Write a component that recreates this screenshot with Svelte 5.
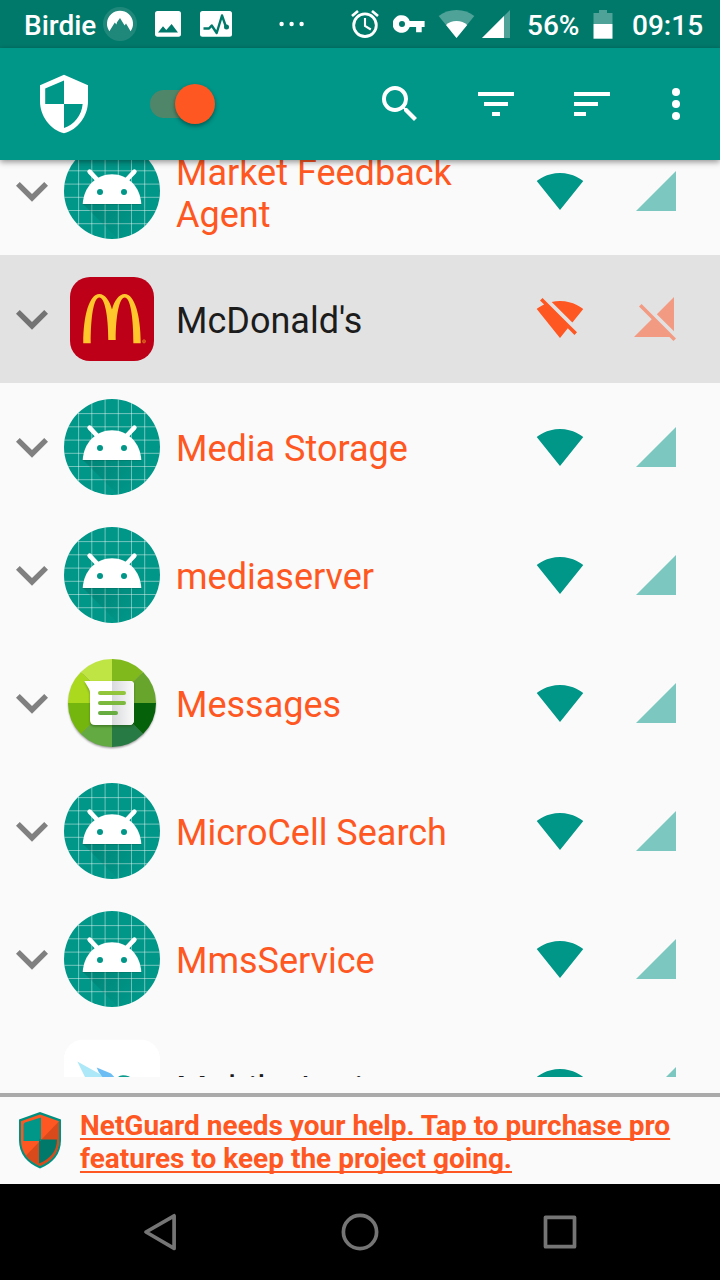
<script>
  const apps = [
    { name: 'Market Feedback Agent', icon: 'android', system: true },
    { name: "McDonald's", icon: 'mcd', blocked: true },
    { name: 'Media Storage', icon: 'android', system: true },
    { name: 'mediaserver', icon: 'android', system: true },
    { name: 'Messages', icon: 'messages', system: true },
    { name: 'MicroCell Search', icon: 'android', system: true },
    { name: 'MmsService', icon: 'android', system: true },
    { name: 'Mobile Assist', icon: 'mobile' }
  ];
  const grid = [14.6, 27.8, 41.1, 54.3, 67.5, 80.7];
  const wedges = [
    ['M48 48V4A44 44 0 0 0 16.9 16.9Z', '#bfe544'],
    ['M48 48L16.9 16.9A44 44 0 0 0 4 48Z', '#abd91d'],
    ['M48 48H4A44 44 0 0 0 16.9 79.1Z', '#74b60d'],
    ['M48 48L16.9 79.1A44 44 0 0 0 48 92Z', '#62aa41'],
    ['M48 48V92A44 44 0 0 0 79.1 79.1Z', '#277a43'],
    ['M48 48L79.1 79.1A44 44 0 0 0 92 48Z', '#05620a'],
    ['M48 48H92A44 44 0 0 0 79.1 16.9Z', '#67a52c'],
    ['M48 48L79.1 16.9A44 44 0 0 0 48 4Z', '#7fb91b']
  ];
</script>

<div class="screen">
  <header class="status">
    <span class="carrier">Birdie</span>
    <svg class="vpn" viewBox="102 0 36 48" width="36" height="48">
      <circle cx="120" cy="24" r="17" fill="#20887b" />
      <path d="M109.4 31.2A13 13 0 1 1 130.6 31.2L126 23.6L124.6 25.5L120 18L117 22.3L116.4 24.6L114.8 22.6Z" fill="#fff" />
    </svg>
    <svg class="photo" viewBox="155 0 26 48" width="26" height="48">
      <path fill="#fff" fill-rule="evenodd" d="M157.5 11H178.5Q181 11 181 13.5V34Q181 36.7 178.5 36.7H157.5Q155 36.7 155 34V13.5Q155 11 157.5 11ZM158 32.5H178L171.6 24L166.3 30L163 26.2Z" />
    </svg>
    <svg class="pulse" viewBox="200 0 32 48" width="32" height="48">
      <rect x="200" y="11" width="32" height="25.7" rx="2.5" fill="#fff" />
      <path d="M203.5 28.5H209L211.7 25.5L216.7 33L222 15.5L226 27" fill="none" stroke="#00796b" stroke-width="2.4" stroke-linejoin="round" />
      <circle cx="226.5" cy="27" r="2.5" fill="#00796b" />
    </svg>
    <svg class="dots" viewBox="278 0 28 48" width="28" height="48" fill="#fff">
      <circle cx="281.6" cy="24" r="2.2" /><circle cx="291.6" cy="24" r="2.2" /><circle cx="301.6" cy="24" r="2.2" />
    </svg>
    <svg class="alarm" viewBox="350 0 30 48" width="30" height="48" fill="none" stroke="#fff">
      <circle cx="365" cy="25.2" r="11.3" stroke-width="2.8" />
      <path d="M365 18V26L370.8 29.5" stroke-width="2.1" />
      <path d="M352 16L358 11M372 11L378 16" stroke-width="2.7" />
    </svg>
    <svg class="key" viewBox="393 0 32 48" width="32" height="48">
      <path fill="#fff" fill-rule="evenodd" d="M409.7 21H424.6V27H421.7V32.3H416.1V27H409.7A8.8 8.8 0 1 1 409.7 21ZM402 21A3 3 0 1 0 402 27A3 3 0 1 0 402 21Z" />
    </svg>
    <svg class="wifi-s" viewBox="438 0 37 48" width="37" height="48">
      <path d="M438.7 16Q446 10 456.5 10T474.3 16L456.5 38Z" fill="#4fa297" />
      <path d="M446 25Q450 21 456.5 21T467.2 25L456.5 38Z" fill="#fff" />
    </svg>
    <svg class="cell-s" viewBox="482 0 28 48" width="28" height="48">
      <path d="M482 38L510 10V38Z" fill="#4fa297" /><path d="M482 38L504 16V38Z" fill="#fff" />
    </svg>
    <span class="percent">56%</span>
    <svg class="battery" viewBox="593 0 20 48" width="20" height="48">
      <path d="M593.5 13H599V10H607V13H612.5V24H593.5Z" fill="#4fa297" /><path d="M593.5 24H612.5V38.7H593.5Z" fill="#fff" />
    </svg>
    <span class="clock">09:15</span>
  </header>

  <div class="toolbar">
    <svg class="shield" width="64" height="64" viewBox="0 0 24 24">
      <path fill="#fff" fill-rule="evenodd" d="M12 1L3 5v6c0 5.55 3.84 10.74 9 12 5.16-1.26 9-6.45 9-12V5zM12 3.2V12H4.95V6.2zM12 12h7c-.4 4.3-3.2 7.8-7 9z" />
    </svg>
    <div class="switch"><span class="thumb"></span></div>
    <div class="actions">
      <svg width="48" height="48" viewBox="0 0 24 24" fill="#fff"><path d="M15.5 14h-.79l-.28-.27A6.47 6.47 0 0 0 16 9.5 6.5 6.5 0 1 0 9.5 16c1.61 0 3.09-.59 4.23-1.57l.27.28v.79l5 4.99L20.49 19l-4.99-5zm-6 0C7.01 14 5 11.99 5 9.5S7.01 5 9.5 5 14 7.01 14 9.5 11.99 14 9.5 14z" /></svg>
      <svg width="48" height="48" viewBox="0 0 24 24" fill="#fff"><path d="M10 18h4v-2h-4v2zM3 6v2h18V6H3zm3 7h12v-2H6v2z" /></svg>
      <svg width="48" height="48" viewBox="0 0 24 24" fill="#fff"><path d="M3 18h6v-2H3v2zM3 6v2h18V6H3zm0 7h12v-2H3v2z" /></svg>
      <svg class="more" width="48" height="48" viewBox="0 0 24 24" fill="#fff"><circle cx="12" cy="6" r="2" /><circle cx="12" cy="12" r="2" /><circle cx="12" cy="18" r="2" /></svg>
    </div>
  </div>

  <main class="list">
    {#each apps as app}
      <div class="row" class:blocked={app.blocked}>
        <svg class="chevron" width="64" height="64" viewBox="0 0 24 24"><path d="M16.59 8.59L12 13.17 7.41 8.59 6 10l6 6 6-6z" /></svg>
        <svg class="icon" width="96" height="96" viewBox="0 0 96 96">
          {#if app.icon === 'android'}
            <defs>
              <clipPath id="disc"><circle cx="48" cy="48" r="48" /></clipPath>
              <linearGradient id="cast" x1="20" y1="55" x2="62" y2="96" gradientUnits="userSpaceOnUse">
                <stop offset="0" stop-color="#004d40" stop-opacity=".26" /><stop offset="1" stop-color="#004d40" stop-opacity="0" />
              </linearGradient>
            </defs>
            <g clip-path="url(#disc)">
              <rect width="96" height="96" fill="#009688" />
              {#each grid as g}
                <path d="M{g} 0V96M0 {g}H96" stroke="#fff" stroke-opacity=".45" stroke-width="1" />
              {/each}
              <path d="M19 61L54 96H96V80L77 61Z" fill="url(#cast)" />
            </g>
            <path d="M18.7 61.8C19.5 45 32 31.8 48 31.8S76.5 45 77.3 61.8Z" fill="#004d40" opacity=".3" />
            <path d="M25.6 28.7L34 37.5M70.4 28.7L62 37.5" stroke="#fff" stroke-width="4.6" stroke-linecap="round" />
            <path d="M18.7 61C19.5 44 32 31.2 48 31.2S76.5 44 77.3 61Z" fill="#fff" />
            <circle cx="36" cy="49" r="3" fill="#009688" /><circle cx="60" cy="49" r="3" fill="#009688" />
          {:else if app.icon === 'mcd'}
            <rect x="6" y="6" width="84" height="84" rx="20" fill="#bd0017" />
            <g transform="translate(6 6)">
              <path fill="#ffc72c" d="M13.3 66.3C13.3 38 19.5 17 29.3 17C35 17 39.7 23.5 42 32.5C44.3 23.5 49 17 54.7 17C64.5 17 70.7 38 70.7 66.3H63.4C63.4 41 60.5 20.6 54.7 20.6C49.5 20.6 45.7 38 45.7 63H38.3C38.3 38 34.5 20.6 29.3 20.6C23.5 20.6 20.7 41 20.7 66.3Z" />
              <circle cx="74" cy="64.4" r="1.5" fill="#bd0017" stroke="#e58a22" stroke-width=".8" /><circle cx="74" cy="64.4" r=".6" fill="#e58a22" />
            </g>
          {:else if app.icon === 'messages'}
            <defs>
              <linearGradient id="glyph" x1="0" y1="36" x2="0" y2="60" gradientUnits="userSpaceOnUse"><stop offset="0" stop-color="#96c83a" /><stop offset="1" stop-color="#63aa42" /></linearGradient>
              <linearGradient id="fold" x1="48" y1="0" x2="70" y2="0" gradientUnits="userSpaceOnUse"><stop offset="0" stop-color="#d9dadd" /><stop offset="1" stop-color="#fafafa" /></linearGradient>
            </defs>
            <circle class="soft" cx="48" cy="49.5" r="43.5" fill="#000" opacity=".45" />
            {#each wedges as [d, fill]}
              <path {d} {fill} />
            {/each}
            <path class="soft" d="M21 27H66Q70 27 70 31V66Q70 71.5 66 71.5H31Q26 71.5 26 67V38Z" fill="#234d0a" opacity=".5" />
            <path d="M20.3 26H66Q70 26 70 30V65Q70 70 65 70H31Q26 70 26 65V38Q26 36 25 34Z" fill="#fff" />
            <path d="M48 26H66Q70 26 70 30V65Q70 70 65 70H48Z" fill="url(#fold)" />
            <path d="M36 36H60A2 2 0 0 1 60 40H36A2 2 0 0 1 36 36ZM36 46H60A2 2 0 0 1 60 50H36A2 2 0 0 1 36 46ZM36 56H52A2 2 0 0 1 52 60H36A2 2 0 0 1 36 56Z" fill="url(#glyph)" />
          {:else}
            <rect y="0.7" width="96" height="96" rx="19" fill="#fff" />
            <path d="M13.3 22.5L24 44H52Z" fill="#ade8f8" />
            <path d="M32.7 28.5L47 34.5L56 44H46Q35 37 32.7 28.5Z" fill="#6dbdf5" />
            <path d="M54 38Q57 35 65.5 37.5V44H54Z" fill="#0a9b8e" />
          {/if}
        </svg>
        <span class="name" class:system={app.system}>{app.name}</span>
        <svg class="wifi" width="48" height="48" viewBox="0 0 24 24">
          {#if app.blocked}
            <path d="M23.64 7c-.45-.34-4.93-4-11.64-4-1.5 0-2.89.19-4.15.48L18.18 13.8 23.64 7zm-6.6 8.22L3.27 1.44 2 2.72l2.05 2.06C1.91 5.76.59 6.82.36 7l11.63 14.49.01.01.01-.01 3.9-4.86 3.32 3.32 1.27-1.27-3.46-3.46z" />
          {:else}
            <path d="M12.01 21.49L23.64 7c-.45-.34-4.93-4-11.64-4C5.28 3 .81 6.66.36 7l11.63 14.49.01.01.01-.01z" />
          {/if}
        </svg>
        <svg class="cell" width="48" height="48" viewBox="0 0 24 24">
          {#if app.blocked}
            <path d="M21 1l-8.59 8.59L21 18.18V1zM4.77 4.5L3.5 5.77l6.36 6.36L1 21h17.73l2 2L22 21.73 4.77 4.5z" />
          {:else}
            <path d="M2 22h20V2z" />
          {/if}
        </svg>
      </div>
    {/each}
  </main>

  <footer class="banner">
    <svg width="44" height="58" viewBox="18 1111 44 58">
      <path d="M40 1112L61 1119.5V1140C61 1154 53 1163 40 1168.5C27 1163 19 1154 19 1140V1119.5Z" fill="#009080" />
      <path d="M40 1114.5L59 1121.3V1140C59 1152.5 52 1160.5 40 1166C28 1160.5 21 1152.5 21 1140V1121.3Z" fill="#ff5722" />
      <path d="M59 1121.3V1140C59 1152.5 52 1160.5 40 1166C35 1163.5 29 1160 26 1155.5Z" fill="#d84a1b" />
      <path d="M41 1117.5V1141H23.5V1125Q23.5 1123 25 1122.4Z" fill="#009688" />
      <path d="M39 1139.5H57C57 1151.5 50 1159 39 1163.5Z" fill="#00796b" />
      <path d="M41 1139.5V1141H39Z" fill="#009688" />
    </svg>
    <p>NetGuard needs your help. Tap to purchase pro features to keep the project going.</p>
  </footer>

  <nav class="nav">
    <svg width="48" height="48" viewBox="0 0 48 48"><path d="M38.1 7.8V40.4L10 24Z" /></svg>
    <svg width="48" height="48" viewBox="0 0 48 48"><circle cx="24" cy="24" r="16.6" /></svg>
    <svg width="48" height="48" viewBox="0 0 48 48"><rect x="9.5" y="9.3" width="29" height="29.4" /></svg>
  </nav>
</div>

<style>
  :global(body) { margin: 0; background: #fafafa; }
  .screen {
    width: 720px; height: 1280px; overflow: hidden;
    display: flex; flex-direction: column;
    background: #fafafa; font-family: Roboto, sans-serif;
  }
  svg { display: block; flex: none; }
  .status {
    flex: none; height: 48px; display: flex; align-items: center;
    background: #00796b; color: #fff;
    font-size: 28px; font-weight: 500; line-height: 44px; white-space: nowrap;
  }
  .status span { box-sizing: border-box; height: 48px; padding-top: 4px; flex: none; }
  .carrier { width: 78px; margin-left: 24px; }
  .photo { margin-left: 17px; }
  .pulse { margin-left: 19px; }
  .dots { margin-left: 46px; }
  .alarm { margin-left: 44px; }
  .key { margin-left: 13px; }
  .wifi-s { margin-left: 13px; }
  .cell-s { margin-left: 7px; }
  .percent { width: 65px; margin-left: 17px; }
  .battery { margin-left: 1px; }
  .clock { margin-left: 19px; }
  .toolbar {
    flex: none; height: 112px; display: flex; align-items: center;
    background: #009688; padding-left: 32px; position: relative; z-index: 1;
    box-shadow: 0 2px 6px rgba(0, 0, 0, .42);
  }
  .switch {
    width: 62px; height: 28px; border-radius: 14px; margin-left: 54px;
    background: #4f8669; display: flex; align-items: center; justify-content: flex-end;
  }
  .thumb {
    flex: none; width: 40px; height: 40px; border-radius: 50%; margin-right: -3px;
    background: #ff5722; box-shadow: 0 2px 4px rgba(0, 0, 0, .4);
  }
  .actions { display: flex; gap: 48px; margin-left: 164px; }
  .more { margin-left: -12px; }
  .list { flex: none; height: 917px; margin-bottom: 16px; overflow: hidden; }
  .row { height: 128px; display: flex; align-items: center; }
  .row:first-child { margin-top: -33px; }
  .row.blocked { background: #e2e2e2; }
  .chevron { fill: #808080; }
  .blocked .chevron { fill: #737373; }
  .name {
    flex: none; box-sizing: border-box; width: 344px; margin: 0 16px; padding-top: 4px;
    font-size: 36px; line-height: 42px; color: #1c1c1c;
  }
  .row:first-child .name, .row:last-child .name { padding-top: 6px; }
  .name.system { color: #ff5722; }
  .wifi { fill: #009688; }
  .cell { margin-left: 48px; fill: #7cc8c0; }
  .blocked .wifi { fill: #ff5722; }
  .blocked .cell { fill: #f29b82; }
  .soft { filter: blur(1.2px); }
  .banner {
    flex: none; box-sizing: border-box; height: 91px; border-top: 4px solid #aaa;
    display: flex; align-items: center; padding-left: 18px;
  }
  .banner svg { margin-bottom: 1px; }
  .banner p {
    margin: 2px 0 0 18px; width: 610px;
    font-size: 28px; font-weight: 700; line-height: 33px; color: #ff5722;
    text-decoration: underline; text-decoration-thickness: 1.5px; text-underline-offset: 3px; text-decoration-skip-ink: none;
  }
  .nav {
    flex: none; height: 96px; background: #000;
    display: flex; align-items: center; justify-content: center; gap: 152px;
  }
  .nav svg { fill: none; stroke: #757575; stroke-width: 3.7; stroke-linejoin: round; }
</style>
